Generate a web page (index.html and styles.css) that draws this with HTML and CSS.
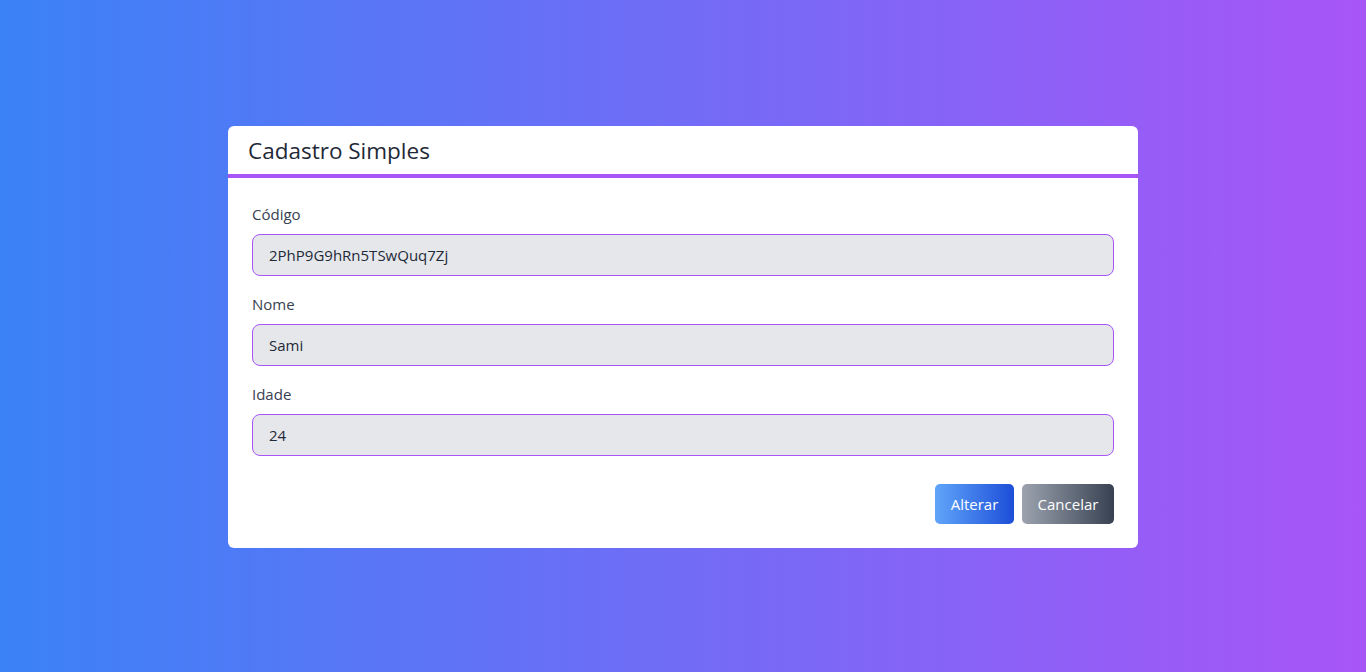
FILE: index.html
```html
<!DOCTYPE html>
<html lang="pt">
<head>
<meta charset="utf-8">
<link rel="stylesheet" href="styles.css">
</head>
<body>
<div class="page">
  <div class="card">
    <div class="card-header"><h1 class="title">Cadastro Simples</h1></div>
    <form class="card-body">
      <div class="field">
        <label class="label">Código</label>
        <input class="input" type="text" value="2PhP9G9hRn5TSwQuq7Zj">
      </div>
      <div class="field">
        <label class="label">Nome</label>
        <input class="input" type="text" value="Sami">
      </div>
      <div class="field">
        <label class="label">Idade</label>
        <input class="input" type="text" value="24">
      </div>
      <div class="actions">
        <button type="button" class="btn btn-primary">Alterar</button>
        <button type="button" class="btn btn-secondary">Cancelar</button>
      </div>
    </form>
  </div>
</div>
</body>
</html>
```
FILE: styles.css
```css
* { box-sizing: border-box; }
html, body { margin: 0; height: 100%; }
body {
  font-family: "Open Sans", "Noto Sans", sans-serif;
  color: #1f2937;
  background: linear-gradient(to right, #3b82f6, #a855f7);
}
.page {
  height: 672px;
  display: flex;
  align-items: flex-start;
  justify-content: center;
  padding-top: 126px;
}
.card {
  width: 910px;
  background: #fff;
  border-radius: 6px;
  overflow: hidden;
}
.card-header {
  height: 52px;
  padding: 2px 20px 0;
  display: flex;
  align-items: center;
  border-bottom: 4px solid #a855f7;
}
.title {
  margin: 0;
  font-weight: 400;
  font-size: 22.5px;
  line-height: 28px;
  color: #1f2937;
}
.card-body {
  margin: 0;
  padding: 24px;
  display: flex;
  flex-direction: column;
}
.field {
  display: flex;
  flex-direction: column;
  gap: 8px;
  margin-bottom: 16px;
}
.label {
  font-size: 15px;
  line-height: 24px;
  color: #374151;
}
.input {
  height: 42px;
  border: 1px solid #a855f7;
  border-radius: 8px;
  background: #e5e7eb;
  padding: 0 16px;
  font-family: inherit;
  font-size: 15px;
  color: #1f2937;
  outline: none;
}
.actions {
  display: flex;
  justify-content: flex-end;
  gap: 8px;
  margin-top: 12px;
}
.btn {
  height: 40px;
  border: none;
  border-radius: 5px;
  padding: 0 16px;
  color: #fff;
  font-family: inherit;
  font-size: 15px;
  cursor: pointer;
}
.btn-primary { background: linear-gradient(to right, #60a5fa, #1d4ed8); width: 79px; padding: 0; }
.btn-secondary { background: linear-gradient(to right, #9ca3af, #374151); width: 92px; padding: 0; }
```
